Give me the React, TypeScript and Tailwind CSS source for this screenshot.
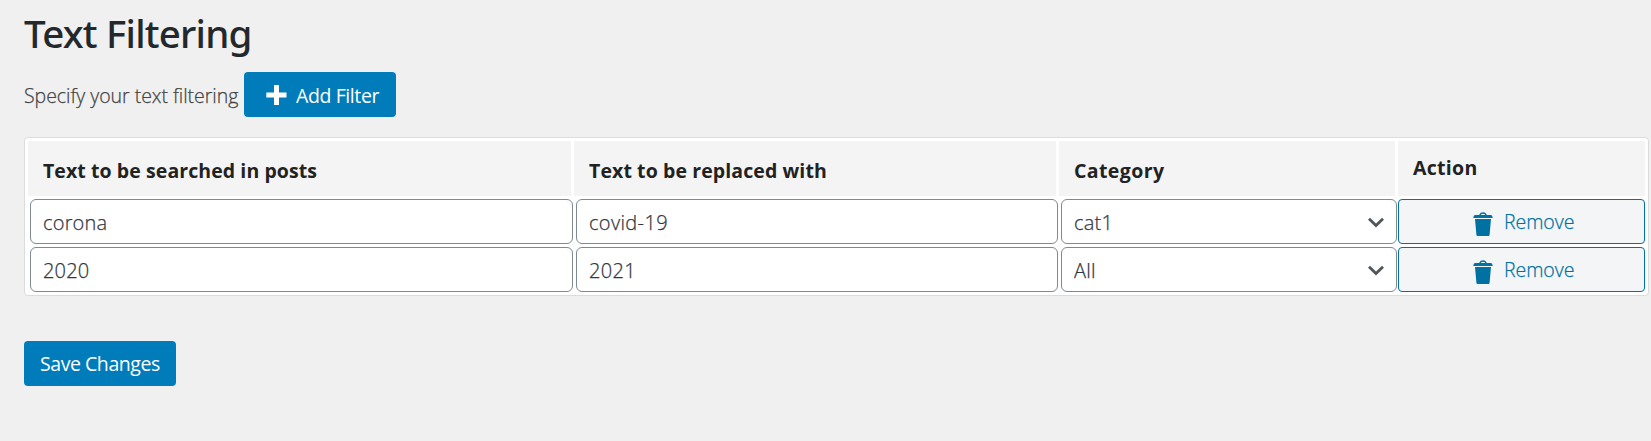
import { useState } from 'react';

type Filter = { id: number; search: string; replace: string; category: string };

const initialFilters: Filter[] = [
  { id: 1, search: 'corona', replace: 'covid-19', category: 'cat1' },
  { id: 2, search: '2020', replace: '2021', category: 'All' },
];

const fieldClass =
  'block h-[45px] rounded-[6px] border border-[#7e8993] bg-white pt-[2px] pl-[12px] text-[20px] font-light text-[#32373c] outline-none [-webkit-text-stroke:0.25px_currentColor]';

const primaryClass =
  'flex h-[45px] w-[152px] items-center rounded-[4px] bg-[#007cba] text-[19.500px] text-white whitespace-nowrap';

function PlusIcon() {
  return (
    <svg className="h-[20px] w-[21px] shrink-0" viewBox="0 0 21 20" fill="currentColor" aria-hidden="true">
      <path d="M8 0h5v7.5h7.5v5H13V20H8v-7.500H.3v-5H8z" />
    </svg>
  );
}

function TrashIcon() {
  return (
    <svg className="mt-[4px] h-[24px] w-[20px] shrink-0" viewBox="0 0 20 24" aria-hidden="true">
      <path d="M6.700 3.600Q7.500 1 10 1T13.300 3.600" fill="none" stroke="currentColor" strokeWidth="1.300" />
      <path d="M2 3h16q1.500 0 1.700 3H.3Q.5 3 2 3zM2 7h16l-1.400 15.800q-.1 1.200-1.300 1.200H4.700q-1.200 0-1.300-1.200z" fill="currentColor" />
    </svg>
  );
}

function ChevronIcon() {
  return (
    <svg className="pointer-events-none absolute top-[18px] right-[12px] h-[11px] w-[18px]" viewBox="0 0 18 11" fill="none" aria-hidden="true">
      <path d="M2 1.800l7 6.700 7-6.700" stroke="#50555a" strokeWidth="2.800" />
    </svg>
  );
}

export default function App() {
  const [filters, setFilters] = useState<Filter[]>(initialFilters);

  const update = (id: number, patch: Partial<Filter>) =>
    setFilters((rows) => rows.map((row) => (row.id === id ? { ...row, ...patch } : row)));

  const addFilter = () =>
    setFilters((rows) => [...rows, { id: Date.now(), search: '', replace: '', category: 'All' }]);

  return (
    <div className="min-h-screen overflow-hidden bg-[#f0f0f0] pl-[24px] font-['Open_Sans','Noto_Sans',sans-serif]">
      <h1 className="mt-[7px] h-[53px] font-['Noto_Sans','Open_Sans',sans-serif] text-[38.500px] leading-[52px] font-medium tracking-[-0.780px] whitespace-nowrap text-[#23282d]">
        Text Filtering
      </h1>

      <div className="mt-[12px] flex h-[45px] items-center">
        <p className="w-[220px] pt-[2px] text-[19.500px] font-light tracking-[-0.030px] whitespace-nowrap text-[#444] [-webkit-text-stroke:0.25px_currentColor]">
          Specify your text filtering
        </p>
        <button type="button" onClick={addFilter} className={`${primaryClass} gap-[9px] pl-[22px]`}>
          <PlusIcon />
          <span className="pt-[2px] tracking-[-0.400px]">Add Filter</span>
        </button>
      </div>

      <div className="mt-[20px] w-[1625px] rounded-[4px] border border-[#dcdcdc] bg-white p-[3px]">
        <div className="grid grid-cols-[543px_482px_336px_247px] gap-[3px]">
          <div className="flex h-[55px] items-center bg-[#f4f4f4] pt-[5px] pl-[15px] text-[19.500px] font-bold whitespace-nowrap text-[#222]">
            <span className="tracking-[0.080px]">Text to be searched in posts</span>
          </div>
          <div className="flex h-[55px] items-center bg-[#f4f4f4] pt-[5px] pl-[15px] text-[19.500px] font-bold whitespace-nowrap text-[#222]">
            <span className="tracking-[0.100px]">Text to be replaced with</span>
          </div>
          <div className="flex h-[55px] items-center bg-[#f4f4f4] pt-[5px] pl-[15px] text-[19.500px] font-bold whitespace-nowrap text-[#222]">
            <span className="tracking-[0.400px]">Category</span>
          </div>
          <div className="flex h-[55px] items-center bg-[#f4f4f4] pb-[1px] pl-[15px] text-[19.500px] font-bold whitespace-nowrap text-[#222]">
            <span className="tracking-[0.300px]">Action</span>
          </div>

          {filters.map((row) => (
            <div key={row.id} className="contents">
              <input
                aria-label="Search"
                className={`${fieldClass} ml-[2px] w-[543px] tracking-[0.200px]`}
                value={row.search}
                onChange={(e) => update(row.id, { search: e.target.value })}
              />
              <input
                aria-label="Replace"
                className={`${fieldClass} ml-[2px] w-[482px] tracking-[0.350px]`}
                value={row.replace}
                onChange={(e) => update(row.id, { replace: e.target.value })}
              />
              <div className="relative ml-[2px] w-[336px]">
                <select
                  aria-label="Category"
                  className={`${fieldClass} w-full appearance-none tracking-[0.200px]`}
                  value={row.category}
                  onChange={(e) => update(row.id, { category: e.target.value })}
                >
                  <option>All</option>
                  <option>cat1</option>
                </select>
                <ChevronIcon />
              </div>
              <button
                type="button"
                onClick={() => setFilters((rows) => rows.filter((r) => r.id !== row.id))}
                className="flex h-[45px] w-[247px] items-center gap-[11px] rounded-[4px] border border-[#0071a1] bg-[#f3f5f6] pl-[74px] text-[19.500px] font-light text-[#0071a1]"
              >
                <TrashIcon />
                <span className="tracking-[-0.050px] [-webkit-text-stroke:0.25px_currentColor]">Remove</span>
              </button>
            </div>
          ))}
        </div>
      </div>

      <button type="button" className={`${primaryClass} mt-[45px] pl-[16px] tracking-[-0.450px]`}>
        Save Changes
      </button>
    </div>
  );
}
